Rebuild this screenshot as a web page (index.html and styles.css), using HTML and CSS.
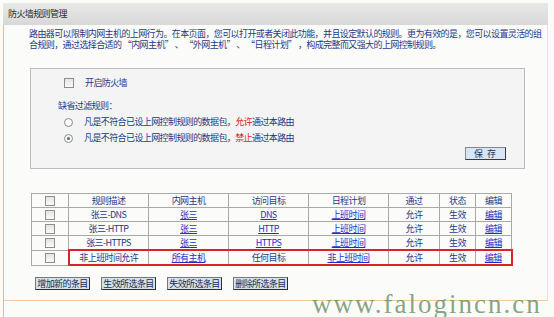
FILE: index.html
```html
<!DOCTYPE html>
<html lang="zh-CN">
<head>
  <meta charset="UTF-8" />
  <title>防火墙规则管理</title>
  <link rel="stylesheet" href="styles.css">
</head>
<body>
  <div class="frame">
    <div class="title">防火墙规则管理</div>

    <div class="content">
      <p class="intro">路由器可以限制内网主机的上网行为。在本页面，您可以打开或者关闭此功能，并且设定默认的规则。更为有效的是，您可以设置灵活的组<br>合规则，通过选择合适的 “内网主机” 、 “外网主机” 、 “日程计划” ，构成完整而又强大的上网控制规则。</p>

      <!-- 防火墙开关与缺省规则 -->
      <div class="panel">
        <div class="check-row"><span class="cb"></span>开启防火墙</div>
        <div class="sub">缺省过滤规则：</div>
        <div class="radio-row"><span class="radio"></span>凡是不符合已设上网控制规则的数据包，<em>允许</em>通过本路由</div>
        <div class="radio-row"><span class="radio on"></span>凡是不符合已设上网控制规则的数据包，<em>禁止</em>通过本路由</div>
        <div class="save-row"><button class="btn-save">保 存</button></div>
      </div>

      <!-- 规则列表 -->
      <table class="rules">
        <tr>
          <td class="c-sel"><span class="cb"></span></td>
          <td class="c-w">规则描述</td>
          <td class="c-w">内网主机</td>
          <td class="c-w">访问目标</td>
          <td class="c-w">日程计划</td>
          <td class="c-m">通过</td>
          <td class="c-s">状态</td>
          <td class="c-s">编辑</td>
        </tr>
        <tr>
          <td><span class="cb"></span></td>
          <td>张三-DNS</td>
          <td><a href="#">张三</a></td>
          <td><a href="#">DNS</a></td>
          <td><a href="#">上班时间</a></td>
          <td>允许</td>
          <td>生效</td>
          <td><a href="#">编辑</a></td>
        </tr>
        <tr>
          <td><span class="cb"></span></td>
          <td>张三-HTTP</td>
          <td><a href="#">张三</a></td>
          <td><a href="#">HTTP</a></td>
          <td><a href="#">上班时间</a></td>
          <td>允许</td>
          <td>生效</td>
          <td><a href="#">编辑</a></td>
        </tr>
        <tr>
          <td><span class="cb"></span></td>
          <td>张三-HTTPS</td>
          <td><a href="#">张三</a></td>
          <td><a href="#">HTTPS</a></td>
          <td><a href="#">上班时间</a></td>
          <td>允许</td>
          <td>生效</td>
          <td><a href="#">编辑</a></td>
        </tr>
        <tr class="marked">
          <td><span class="cb"></span></td>
          <td>非上班时间允许</td>
          <td><a href="#">所有主机</a></td>
          <td>任何目标</td>
          <td><a href="#">非上班时间</a></td>
          <td>允许</td>
          <td>生效</td>
          <td><a href="#">编辑</a></td>
        </tr>
      </table>

      <div class="actions">
        <button class="btn">增加新的条目</button>
        <button class="btn">生效所选条目</button>
        <button class="btn">失效所选条目</button>
        <button class="btn">删除所选条目</button>
      </div>
    </div>

    <div class="foot"></div>
  </div>

  <div class="watermark">www.falogincn.cn</div>
</body>
</html>
```

FILE: styles.css
```css
html, body {
  margin: 0;
  padding: 0;
  background: #fbfbf8;
  color: #1b3a85;
  font-family: "Noto Sans CJK SC", "Noto Sans", sans-serif;
  font-size: 9px;
  letter-spacing: -0.6px;
  overflow: hidden;
}
.frame {
  margin: 3px 0 0 3px;
  width: 545px;
  height: 314px;
  display: flex;
  flex-direction: column;
}
.title {
  height: 22px;
  line-height: 21px;
  padding-left: 5px;
  color: #2b2b2b;
  background: linear-gradient(#e9e9e9, #d8d8d8);
}
.content {
  border-left: 1px solid #efb676;
  border-right: 1px solid #f2e2c0;
  border-bottom: 1px solid #efcb9f;
  background: #fbfbfa;
  padding: 3px 0 10px 0;
}
.intro {
  margin: 0 0 0 25px;
  line-height: 11px;
  white-space: nowrap;
}
.panel {
  margin: 18px 0 0 26px;
  width: 493px;
  border: 1px solid #bcbcbc;
  background: #f4f4f4;
  padding: 7px 0 8px 0;
}
.check-row, .radio-row {
  display: flex;
  align-items: center;
  height: 14px;
  line-height: 14px;
  padding-left: 33px;
}
.check-row .cb {
  margin-right: 11px;
}
.sub {
  margin: 9px 0 0 27px;
  line-height: 14px;
}
.radio-row {
  margin-top: 2px;
}
.radio-row em {
  font-style: normal;
  color: #e0201c;
}
.cb {
  display: inline-block;
  width: 8px;
  height: 8px;
  border: 1px solid #8e8e8e;
  background: linear-gradient(#e4e4e4, #fafafa);
  vertical-align: middle;
}
.radio {
  display: inline-block;
  box-sizing: border-box;
  width: 9px;
  height: 9px;
  border: 1px solid #8a8a8a;
  border-radius: 50%;
  background: #fafafa;
  margin-right: 11px;
  position: relative;
}
.radio.on::after {
  content: "";
  position: absolute;
  left: 2px;
  top: 2px;
  width: 3px;
  height: 3px;
  border-radius: 50%;
  background: #3f7a3f;
}
.save-row {
  display: flex;
  justify-content: flex-end;
  padding-right: 18px;
  margin-top: 2px;
}
.btn-save {
  width: 41px;
  height: 13px;
  padding: 0;
  font-family: inherit;
  font-size: 9px;
  line-height: 10px;
  letter-spacing: 1px;
  color: #1f2f55;
  background: #d6e6f6;
  border: 1px solid #3a3a3a;
  border-top-color: #888;
  border-left-color: #888;
}
.rules {
  margin: 24px 0 0 27px;
  width: 480px;
  border-collapse: collapse;
  table-layout: fixed;
}
.rules td {
  border: 1px solid #a9a9a9;
  height: 13px;
  padding: 0;
  line-height: 13px;
  text-align: center;
  white-space: nowrap;
}
.rules .c-sel { width: 36px; }
.rules .c-w { width: 79px; }
.rules .c-m { width: 50px; }
.rules .c-s { width: 35px; }
.rules td .cb {
  display: block;
  margin: 0 auto;
}
.rules a {
  color: #1f30c8;
  text-decoration: underline;
}
.rules tr.marked td {
  border-top: 2px solid #d9222a;
  border-bottom: 2px solid #d9222a;
}
.rules tr.marked td:first-child {
  border-top: 1px solid #a9a9a9;
  border-bottom: 1px solid #a9a9a9;
  border-right: 2px solid #d9222a;
}
.rules tr.marked td:last-child {
  border-right: 2px solid #d9222a;
}
.actions {
  display: flex;
  gap: 11px;
  margin: 11px 0 0 31px;
}
.btn {
  width: 55px;
  height: 13px;
  padding: 0;
  font-family: inherit;
  font-size: 9px;
  line-height: 10px;
  letter-spacing: -0.6px;
  white-space: nowrap;
  color: #1a2a50;
  background: #d6e2ea;
  border: 1px solid #2e2e2e;
  border-top-color: #777;
  border-left-color: #777;
}
.foot {
  flex: 1;
  border-left: 1px solid #efb676;
}
.watermark {
  position: absolute;
  left: 312px;
  top: 289px;
  font-family: "Liberation Serif", serif;
  font-size: 27px;
  letter-spacing: 2px;
  line-height: 30px;
  color: rgba(98, 135, 92, 0.75);
  white-space: nowrap;
}
```
